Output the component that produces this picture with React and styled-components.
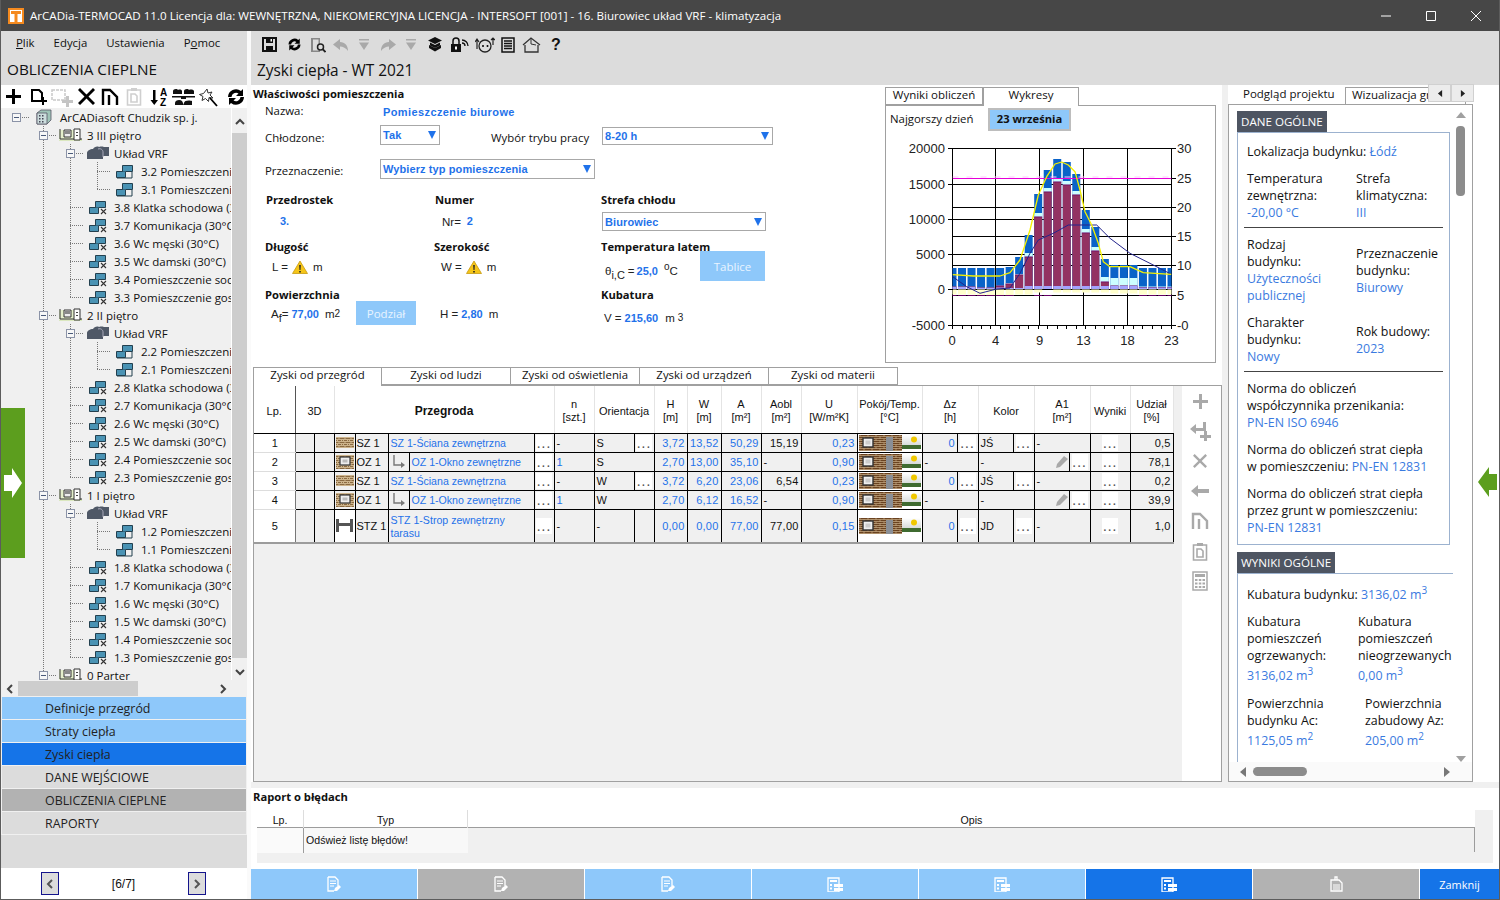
import React from 'react';
import styled, { createGlobalStyle, css } from 'styled-components';

const UI = '"Open Sans", "Noto Sans", sans-serif';
const ARIAL = '"Liberation Sans", Arial, sans-serif';
const BLUE = '#1f72ea';
const LIGHTBLUE = '#8ec8fa';
const ACTIVE = '#1574e8';
const BAND = '#dcdcdc';
const PANEL = '#f0f0f0';
const EDGE = '#a0a0a0';

const Global = createGlobalStyle`
  html, body { margin: 0; padding: 0; background: #fff; }
  *, *::before, *::after { box-sizing: border-box; }
  #root { width: 1500px; height: 900px; }
`;

const Win = styled.div`
  position: relative; width: 1500px; height: 900px; overflow: hidden; display: flex; flex-direction: column;
  background: #fff; border: 1px solid #5c5c5c; border-top: 0; font-family: ${UI}; color: #111; font-size: 12px;
`;
const TitleBar = styled.header`
  height: 31px; flex: none; margin: 0 -1px; background: #474747; color: #fff; display: flex; align-items: center;
  padding: 0 2px 0 8px; font-size: 11.6px;
`;
const TitleText = styled.div`flex: 1; margin-left: 6px; white-space: nowrap;`;
const WinBtn = styled.div`width: 45px; height: 31px; display: flex; align-items: center; justify-content: center;`;
const Workspace = styled.div`flex: 1; display: flex; min-height: 0;`;
const Sp = styled.span`width: ${p => p.$w}px; flex: none;`;

/* left column */
const LeftCol = styled.aside`width: 246px; flex: none; display: flex; flex-direction: column; background: ${PANEL};`;
const Gap = styled.div`width: 4px; flex: none; background: #fafafa;`;
const HeadBand = styled.div`height: 54px; flex: none; background: ${BAND};`;
const MenuBar = styled.nav`height: 23px; display: flex; align-items: center; padding-left: 15px; gap: 19px; font-size: 11.4px;`;
const MenuItem = styled.span`u { text-decoration: underline; }`;
const LeftTitle = styled.div`padding: 1px 0 0 6px; font-size: 15.3px; line-height: 29px; white-space: nowrap;`;
const LeftTools = styled.div`height: 23px; flex: none; background: #fff; display: flex; align-items: center; padding-left: 4px;`;
const TreeBox = styled.div`height: 572px; flex: none; display: flex;`;
const TreeList = styled.div`flex: 1; min-width: 0; overflow: hidden; padding-left: 2px;`;
const Row = styled.div`display: flex; height: 18px; align-items: center; white-space: nowrap; font-size: 11.5px;`;
const dotted = css`
  background-image: repeating-linear-gradient(to bottom, #777 0 1px, transparent 1px 2px), repeating-linear-gradient(to right, #777 0 1px, transparent 1px 2px);
`;
const Guide = styled.div`
  width: 27px; height: 18px; flex: none; position: relative; display: flex; align-items: center; justify-content: center;
  background-repeat: no-repeat;
  ${p => p.$kind === 'v' && css`
    background-image: repeating-linear-gradient(to bottom, #777 0 1px, transparent 1px 2px);
    background-size: 1px 100%; background-position: 13px 0;`}
  ${p => (p.$kind === 't' || p.$kind === 'e') && css`
    ${dotted}
    background-size: 1px 100%, 14px 1px; background-position: 13px 0, 13px 9px;`}
  ${p => p.$kind === 'l' && css`
    ${dotted}
    background-size: 1px 10px, 14px 1px; background-position: 13px 0, 13px 9px;`}
  ${p => p.$kind === 'r' && css`
    background-image: repeating-linear-gradient(to right, #777 0 1px, transparent 1px 2px);
    background-size: 14px 1px; background-position: 13px 9px;`}
`;
const Expander = styled.div`
  width: 9px; height: 9px; border: 1px solid #8b93a7; background: #f7f7f7; display: flex; align-items: center; justify-content: center;
  &::after { content: ''; width: 5px; height: 1px; background: #4a5a7a; }
`;
const RowIcon = styled.div`width: 27px; height: 18px; flex: none; display: flex; align-items: center; justify-content: center;`;
const RowText = styled.span`margin-left: 3px;`;
const VScroll = styled.div`
  width: 16px; flex: none; display: flex; flex-direction: column; align-items: center; padding: 10px 0 4px; background: ${PANEL}; border-left: 1px solid #fff;
`;
const VThumb = styled.div`width: 16px; flex: 1; margin: 7px 0 10px; background: #cdcdcd;`;
const HScrollLeft = styled.div`height: 17px; flex: none; display: flex; align-items: center; padding: 0 20px 0 5px;`;
const HThumb = styled.div`width: 120px; height: 15px; margin: 0 auto 0 4px; background: #cdcdcd;`;
const NavList = styled.div`height: 138px; flex: none; padding: 0 0 0 1px; width: 245px;`;
const NavItem = styled.div`
  height: 22px; margin-bottom: 1px; padding-left: 43px; line-height: 24px; font-size: 12.4px; color: #222; white-space: nowrap; overflow: hidden;
  background: ${p => p.$tone === 'blue' ? LIGHTBLUE : p.$tone === 'active' ? ACTIVE : p.$tone === 'dark' ? '#b2b2b2' : BAND};
`;
const NavFill = styled.div`height: 33px; flex: none; background: ${BAND}; width: 246px;`;
const Pager = styled.div`height: 31px; flex: none; background: #fff; display: flex; align-items: center; padding-left: 40px; font-size: 12px;`;
const PagerBtn = styled.div`width: 18px; height: 23px; border: 1px solid #14148c; background: ${BAND}; display: flex; align-items: center; justify-content: center;`;
const PagerText = styled.div`width: 129px; text-align: center; font-family: ${ARIAL};`;

/* right column */
const RightCol = styled.div`flex: 1; min-width: 0; display: flex; flex-direction: column;`;
const MainHead = styled.div`height: 54px; flex: none; background: ${BAND};`;
const MainTools = styled.div`height: 25px; display: flex; align-items: center; padding: 2px 0 0 11px;`;
const MainTitle = styled.div`padding: 1px 0 0 6px; font-size: 15.4px; line-height: 28px;`;
const Content = styled.div`height: 697px; flex: none; display: flex; background: #fff;`;
const MainPanel = styled.main`width: 971px; flex: none; display: flex; flex-direction: column;`;
const Divider = styled.div`width: 6px; flex: none; background: ${PANEL};`;
const TopArea = styled.div`height: 282px; flex: none; display: flex;`;
const Form = styled.section`width: 634px; flex: none; padding-left: 2px;`;
const FormTitle = styled.div`height: 18px; font-weight: 700; font-size: 11.2px; line-height: 17px;`;
const FormBody = styled.div`margin-left: 12px;`;
const FormRow = styled.div`display: flex; margin-top: ${p => p.$mt || 0}px; height: ${p => p.$h}px;`;
const Lab = styled.div`
  width: ${p => p.$w}px; flex: none; font-size: 11.4px; padding-top: ${p => p.$pt || 0}px; margin-left: ${p => p.$ml || 0}px; white-space: nowrap;
`;
const BlueVal = styled.span`color: ${BLUE}; font: 700 11px ${ARIAL}; white-space: nowrap; margin-left: ${p => p.$ml || 0}px; margin-top: ${p => p.$mt || 0}px;`;
const NameVal = styled(BlueVal)`padding-left: 3px; letter-spacing: .4px; line-height: 18px;`;
const Select = styled.div`
  width: ${p => p.$w}px; height: ${p => p.$h || 20}px; flex: none; border: 1px solid #a8a8a8; padding: 0 3px 0 2px; display: flex; align-items: center; justify-content: space-between;
  color: ${BLUE}; font: 700 11px ${ARIAL}; letter-spacing: .1px; background: #fff; margin-left: ${p => p.$ml || 0}px; margin-top: ${p => p.$mt || 0}px;
`;
const Tri = styled.span`width: 0; height: 0; border-left: 4px solid transparent; border-right: 4px solid transparent; border-top: 8px solid ${BLUE};`;
const FieldGrid = styled.div`
  margin-top: 14px; display: grid; grid-template-columns: 169px 167px 1fr; grid-template-rows: 16px 31px 16px 32px 16px 30px;
`;
const FieldHead = styled.div`font-weight: 700; font-size: 11.2px; line-height: 14px; white-space: nowrap; padding-left: ${p => p.$pl || 0}px;`;
const FieldVal = styled.div`
  display: flex; align-items: center; height: 16px; gap: ${p => p.$gap ?? 3}px; font: 11.5px ${ARIAL}; color: #222; white-space: nowrap; flex: none;
  width: ${p => p.$w ? p.$w + 'px' : 'auto'}; padding-left: ${p => p.$pl || 0}px; margin-top: ${p => p.$mt || 0}px;
`;
const Unit = styled.span`margin-left: ${p => p.$ml || 0}px;`;
const Sub = styled.span`font-size: 11px; line-height: 0; position: relative; top: 4px;`;
const Sup = styled.sup`font-size: 10px; line-height: 0; vertical-align: 5px;`;
const FlatBtn = styled.div`
  width: ${p => p.$w}px; height: ${p => p.$h}px; background: ${LIGHTBLUE}; color: #e9f4ff; font-size: 11.5px; display: flex; align-items: center; justify-content: center; flex: none;
  margin-top: ${p => p.$mt || 0}px; margin-left: ${p => p.$ml || 0}px;
`;
const ValWithBtn = styled.div`display: flex; align-items: flex-start;`;

const ChartCol = styled.section`width: 331px; flex: none; padding-top: 2px;`;
const ChartTabs = styled.div`display: flex; height: 18px;`;
const SmallTab = styled.div`
  width: ${p => p.$w}px; height: ${p => p.$active ? 19 : 18}px; border: 1px solid ${EDGE}; border-bottom: ${p => p.$active ? 0 : 1}px solid ${EDGE}; background: #fff; text-align: center;
  font-size: 11.5px; line-height: 14px; position: relative; white-space: nowrap; overflow: hidden;
`;
const ChartBody = styled.div`height: 258px; border: 1px solid ${EDGE}; background: #fff;`;
const ChartHead = styled.div`height: 26px; display: flex; padding-left: 4px; font-size: 11.4px; line-height: 26px;`;
const WorstLab = styled.span`width: 98px; flex: none; white-space: nowrap;`;
const Worst = styled.div`
  margin-top: 2px; width: 83px; height: 23px; border: 2px solid #bdbdbd; background: ${LIGHTBLUE}; font-weight: 700; font-size: 11.2px; line-height: 18px; text-align: center; white-space: nowrap;
`;
const ChartSvg = styled.svg`display: block; font-family: ${ARIAL};`;

const TabStrip = styled.div`height: 18px; flex: none; display: flex; margin-left: 2px; position: relative; z-index: 1;`;
const MainTab = styled.div`
  width: 129px; height: ${p => p.$active ? 19 : 18}px; border: 1px solid ${EDGE}; border-left: ${p => p.$first ? 1 : 0}px solid ${EDGE}; border-bottom: ${p => p.$active ? 0 : 1}px solid ${EDGE};
  background: #fff; text-align: center; font-size: 11.4px; line-height: 14px; white-space: nowrap;
`;
const TablePanel = styled.div`flex: 1; margin-left: 2px; border: 1px solid ${EDGE}; display: flex; min-height: 0; background: ${PANEL};`;
const TableArea = styled.div`width: 928px; flex: none;`;
const SideTools = styled.div`flex: 1; background: #fff; display: flex; flex-direction: column; align-items: center; padding-right: 3px;`;
const SideTool = styled.div`height: 30px; display: flex; align-items: center; justify-content: center;`;
const Grid = styled.table`
  width: 919px; table-layout: fixed; border-collapse: collapse; font: 11px ${ARIAL}; color: #111; background: #fff; border-bottom: 2px solid #9c9c9c;
`;
const Th = styled.th`
  height: 47px; font-weight: ${p => p.$strong ? 700 : 400}; font-size: ${p => p.$strong ? 12 : 11}px; border-right: 1px solid #e4e4e4; border-bottom: 1px solid #000; padding: 4px 0 0; line-height: 13px; white-space: nowrap;
`;
const DarkTh = styled(Th)`border-right-color: #555;`;
const TBodyRow = styled.tr`height: ${p => p.$h || 19}px;`;
const Td = styled.td`
  padding: 2px ${p => p.$align === 'right' ? 2 : 1}px 0 ${p => p.$pl ?? (p.$align === 'right' ? 0 : 2)}px; height: inherit; background: ${PANEL}; color: ${p => p.$blue ? BLUE : '#111'};
  text-align: ${p => p.$align || 'left'}; border-right: 1px solid #000; border-bottom: 1px solid #000; line-height: 13px; overflow: hidden; white-space: ${p => p.$wrap ? 'normal' : 'nowrap'};
  letter-spacing: ${p => p.$num ? .2 : 0}px; font-size: ${p => p.$fs || 11}px;
`;
const LpTd = styled(Td)`text-align: center; background: #fff; border-bottom: 1px solid #ddd; border-right: 1px solid #777;`;
const PicTd = styled(Td)`padding: 0; background: ${p => p.$white ? '#fff' : PANEL};`;
const CenterBox = styled.div`display: flex; align-items: center; justify-content: ${p => p.$j || 'center'};`;
const DotsBox = styled.div`
  width: 16px; height: 16px; margin: 0 auto; background: #fff; font: 700 10px/20px ${ARIAL}; letter-spacing: 2px; padding-left: 1px; text-align: center; color: #555; overflow: hidden;
`;
const Dots = () => <PicTd><DotsBox>...</DotsBox></PicTd>;

const RightPanel = styled.aside`width: 245px; flex: none; padding-top: 2px; position: relative; font-size: 12.4px;`;
const RTabs = styled.div`height: 17px; display: flex; padding-left: 1px; overflow: hidden;`;
const RTab = styled.div`
  width: ${p => p.$w}px; height: 17px; flex: none; border-right: 1px solid ${EDGE}; border-top: ${p => p.$active ? 0 : 1}px solid ${EDGE}; font-size: 11.5px; line-height: 14px; white-space: nowrap; overflow: hidden; background: #fff; padding-left: ${p => p.$active ? 14 : 6}px;
`;
const TabArrows = styled.div`position: absolute; top: -1px; left: 200px; display: flex;`;
const TabArrow = styled.div`width: 23px; height: 18px; background: #ececec; border: 1px solid #d0d0d0; display: flex; align-items: center; justify-content: center;`;
const RBody = styled.div`height: 678px; border: 1px solid ${EDGE}; display: flex; flex-direction: column;`;
const RMain = styled.div`flex: 1; min-height: 0; display: flex;`;
const RContent = styled.div`width: 224px; flex: none; overflow: hidden; padding: 6px 0 0 8px;`;
const RV = styled.div`flex: 1; display: flex; flex-direction: column; align-items: center; padding: 7px 4px 0 0;`;
const RVThumb = styled.div`width: 9px; height: 70px; margin: 8px 0 auto; border-radius: 4px; background: #8c8c8c;`;
const RH = styled.div`height: 19px; flex: none; display: flex; align-items: center; padding: 0 22px 0 11px; background: #fafafa;`;
const RHThumb = styled.div`width: 54px; height: 9px; margin: 0 auto 0 7px; border-radius: 5px; background: #8c8c8c;`;
const SecHead = styled.div`
  display: inline-block; vertical-align: top; height: 21px; padding: 0 4px; background: #4e5562; color: #fff; font-size: 11.6px; line-height: 21px; white-space: nowrap; margin-top: ${p => p.$mt || 0}px;
`;
const SecBox = styled.div`
  width: ${p => p.$w}px; border: 1px solid #9cb2cf; ${p => p.$open && 'border-right: 0; border-bottom: 0;'} padding: ${p => p.$pt}px 0 8px 9px; line-height: 17px;
`;
const Para = styled.div`margin-top: ${p => p.$mt || 0}px; white-space: ${p => p.$nowrap ? 'nowrap' : 'normal'}; width: ${p => p.$w ? p.$w + 'px' : 'auto'};`;
const Val = styled.span`color: #3a7ae0;`;
const ValLine = styled.div`color: #3a7ae0; margin-top: ${p => p.$mt || 0}px; white-space: nowrap;`;
const TwoCol = styled.div`
  display: grid; grid-template-columns: ${p => p.$first}px 1fr; margin-top: ${p => p.$mt ?? 10}px; align-items: ${p => p.$center ? 'center' : 'start'}; width: ${p => p.$w || 196}px; white-space: nowrap;
`;
const Rule = styled.hr`border: 0; border-top: 1px solid #444; margin: 6px 0 8px -3px; width: 199px;`;

const MidBand = styled.div`height: 6px; flex: none; background: ${PANEL};`;
const ErrorSec = styled.section`height: 81px; flex: none; background: #fff; padding-left: 2px;`;
const ErrTitle = styled.div`font-weight: 700; font-size: 11.2px; line-height: 18px; height: 22px;`;
const ErrGrid = styled.div`margin-left: 4px; width: 1236px; display: flex;`;
const ErrMain = styled.div`width: 1218px; flex: none; font: 10.6px ${ARIAL};`;
const ErrStrip = styled.div`flex: 1; height: 53px; background: ${PANEL};`;
const ErrHead = styled.div`display: grid; grid-template-columns: 47px 164px 1fr; height: 18px; text-align: center; line-height: 20px; border-bottom: 1px solid #9c9c9c;`;
const ErrCol = styled.div`border-right: 1px solid #ddd;`;
const ErrRow = styled.div`display: grid; grid-template-columns: 47px 164px 1fr; height: 24px; line-height: 25px; border-bottom: 1px solid #9c9c9c; border-right: 1px solid #9c9c9c;`;
const ErrLp = styled.div`background: #fafafa; border-right: 1px solid #9c9c9c;`;
const ErrText = styled.div`background: #f8f8f8; padding-left: 2px; white-space: nowrap;`;
const ErrDesc = styled.div`background: ${PANEL};`;
const ErrFoot = styled.div`height: 11px; background: ${PANEL};`;

const BottomBar = styled.footer`height: 30px; flex: none; display: flex; gap: 1px;`;
const BarBtn = styled.div`
  width: 166px; flex: ${p => p.$grow ? 1 : 'none'}; background: ${p => p.$tone === 'grey' ? '#b2b2b2' : p.$tone === 'active' ? ACTIVE : LIGHTBLUE};
  display: flex; align-items: center; justify-content: center; color: #fff; font-size: 11px;
`;

const LeftFlag = styled.div`
  position: absolute; left: 0; top: 408px; width: 24px; height: 150px; background: #5c9e1e; display: flex; align-items: center; justify-content: center;
`;
const RightFlag = styled.div`position: absolute; left: 1477px; top: 467px;`;

/* ---- icons ---- */
const Svg = styled.svg`flex: none; display: block; ${p => p.$flip && 'transform: scaleX(-1);'}`;
const I = ({ w = 16, h = 16, vb, flip, children }) => <Svg width={w} height={h} viewBox={vb || `0 0 ${w} ${h}`} $flip={flip}>{children}</Svg>;

const AppLogo = () => <I w={16} h={16}><rect width="16" height="16" fill="#f58a1f" /><rect x="2" y="2" width="12" height="12" fill="#fff" /><path d="M3 3h10v3H9.500v8h-3V6H3z" fill="#f58a1f" /></I>;
const PlusI = ({ c = '#000', s = 17 }) => <I w={s} h={s} vb="0 0 17 17"><path d="M7 1h3v6h6v3h-6v6H7v-6H1V7h6z" fill={c} /></I>;
const DocPlus = () => <I w={18} h={20}><path d="M2 3h7l3 3v8H2z" fill="none" stroke="#000" strokeWidth="2" /><path d="M12 10h2v3h3v2h-3v3h-2v-3H9v-2h3z" fill="#000" /></I>;
const CopyPlus = () => <I w={22} h={20}><path d="M1 3h13v10H1z" fill="none" stroke="#c9c9c9" strokeWidth="1.500" strokeDasharray="3 1" /><path d="M15 9h3v4h4v3h-4v4h-3v-4h-4v-3h4z" fill="#c4c4c4" /></I>;
const XI = ({ c = '#000', s = 17 }) => <I w={s} h={s} vb="0 0 17 17"><path d="M2 0l6.500 6.500L15 0l2 2-6.500 6.500L17 15l-2 2-6.500-6.500L2 17l-2-2 6.500-6.500L0 2z" fill={c} /></I>;
const Fork = ({ c = '#000' }) => <I w={19} h={18}><path d="M2 17V2h7l7 7v8M8 17V7" fill="none" stroke={c} strokeWidth="2.400" /></I>;
const Clip = ({ c = '#cfcfcf' }) => <I w={16} h={19}><path d="M1.500 3h13v15h-13z" fill="none" stroke={c} strokeWidth="1.600" /><path d="M5 1h6v3H5z" fill={c} /><path d="M5 7h4l2 2v6H5z" fill="none" stroke={c} strokeWidth="1.600" /></I>;
const SortAZ = () => <I w={20} h={20}><path d="M4 3h2.500v10H9l-3.750 5L1.500 13H4z" fill="#000" /><text x="11" y="9" fontSize="10" fontWeight="700" fontFamily={ARIAL}>A</text><text x="11" y="19" fontSize="10" fontWeight="700" fontFamily={ARIAL}>Z</text></I>;
const Stacked = () => <I w={23} h={20}><path d="M1 7V4c0-2 4-3 5-1 2-1 4 0 4 1v3zM12 7V4c0-2 4-3 5-1 2-1 5 0 5 1v3z" fill="#111" /><path d="M0 9h23v1.500H0z" fill="#111" /><path d="M9 10h5v2H9zM3 18v-2c0-3 5-4 7-2l2 4zM12 18v-2c0-3 6-3 8-2v4z" fill="#111" /></I>;
const Wand = () => <I w={19} h={20}><path d="M8 2l1 4 4-1-2 3 3 3-4-.5-.5 4-3-3-3.500 2 1-4-3.500-2 4-1z" fill="none" stroke="#333" strokeWidth="1" /><path d="M11 11l7 8" stroke="#000" strokeWidth="1.800" /></I>;
const Sync = ({ s = 20 }) => <I w={s} h={s} vb="0 0 20 20"><path d="M2 10a8 8 0 0 1 13-6l2-2v7h-7l2.500-2.500A4.500 4.500 0 0 0 5.500 10z" fill="#000" /><path d="M18 10a8 8 0 0 1-13 6l-2 2v-7h7l-2.500 2.500A4.500 4.500 0 0 0 14.500 10z" fill="#000" /></I>;
const SaveI = () => <I w={15} h={15}><path d="M1 1h13v13H1z" fill="none" stroke="#111" strokeWidth="2" /><path d="M4 1h7v5H4zM4 9h7v5H4z" fill="#111" /><path d="M8.500 2h1.500v2.500H8.500z" fill="#fff" /></I>;
const FileSearch = () => <I w={16} h={16}><path d="M1 1h9v14H1z" fill="#888" /><path d="M3 2.500h5.500v11H3z" fill="#dcdcdc" /><circle cx="10.500" cy="10" r="3" fill="#dcdcdc" stroke="#222" strokeWidth="1.500" /><path d="M12.500 12l3 3" stroke="#222" strokeWidth="1.800" /></I>;
const UndoI = ({ flip }) => <I w={16} h={14} flip={flip}><path d="M7 1L0 6.500 7 12V8.500c3 0 6 1.500 8 4.500 0-6-3-8.500-8-9z" fill="#a9a9a9" /></I>;
const DropTri = () => <I w={10} h={12}><path d="M0 0h10v1.500H0zM0 3.500h10L5 11z" fill="#a9a9a9" /></I>;
const Hat = () => <I w={16} h={15}><path d="M8 0l7 3.500L8 7 1 3.500zM3 5.500l5 2.500 5-2.500v3l-5 2.500-5-2.500z" fill="#111" /><path d="M2 8l6 3 6-3v3l-6 3.500L2 11z" fill="#111" /></I>;
const LockWifi = () => <I w={19} h={16}><path d="M1 7h10v8H1z" fill="#111" /><path d="M3 7V4a3 3 0 0 1 6 0v3" fill="none" stroke="#111" strokeWidth="1.500" /><rect x="5" y="9.500" width="2" height="3" fill="#fff" /><path d="M12 6a3 3 0 0 1 3 3M12 3a6 6 0 0 1 6 6" fill="none" stroke="#111" strokeWidth="1.300" /></I>;
const Face = () => <I w={20} h={16}><circle cx="10" cy="9" r="6" fill="none" stroke="#222" strokeWidth="1.300" /><circle cx="8" cy="9" r="1" /><circle cx="12.500" cy="9" r="1" /><path d="M2 12V3M0 5l2-3 2 3M18 8V1M16 3l2-2 2 2" fill="none" stroke="#222" strokeWidth="1.200" /></I>;
const ListDoc = () => <I w={14} h={16}><path d="M1 1h12v14H1z" fill="none" stroke="#111" strokeWidth="1.500" /><path d="M3 4h8M3 6.500h8M3 9h8M3 11.500h8" stroke="#111" strokeWidth="1.300" /></I>;
const House = () => <I w={19} h={16}><path d="M1 8l8-7 9 7M3 8v7h13V8" fill="none" stroke="#333" strokeWidth="1.300" /><path d="M9 1v6l5 1" fill="none" stroke="#333" strokeWidth="1" /></I>;
const HelpMark = styled.span`font: 700 16px/16px ${ARIAL};`;

const BuildingI = () => <I w={16} h={16}><path d="M1 4l4-3h10v10l-4 4H1z" fill="#9fc4b8" stroke="#556" strokeWidth=".8" /><path d="M1 4h10v11H1z" fill="#cdd" stroke="#556" strokeWidth=".8" /><path d="M3 6h1.500v1.500H3zM6 6h1.500v1.500H6zM3 9h1.500v1.500H3zM6 9h1.500v1.500H6zM3 12h1.500v1.500H3zM6 12h1.500v1.500H6z" fill="#445" /></I>;
const FloorI = () => <I w={23} h={14}><rect y="11" width="23" height="2" fill="#dbe8c0" /><rect y="2" width="21" height="10" fill="#e4efcc" /><path d="M1 1v10M1 11h22" stroke="#333" strokeWidth="1" fill="none" /><path d="M5 2h7v7H5z" fill="#eee" stroke="#333" strokeWidth="1" /><path d="M6 3h5v3H6z" fill="#888" /><path d="M15 1h6v11h-6z" fill="#fff" stroke="#333" strokeWidth="1" /><path d="M17 4h2v1h-2zM17 7h2v1h-2z" fill="#444" /></I>;
const VrfI = () => <I w={22} h={14}><path d="M0 13V7c0-2 3-4 6-4 1-2 4-3 6-2 3-1 5 0 5 0h5v9h-6v3z" fill="#4f5866" /><path d="M11 3c3-1 5 1 5 3v5" stroke="#aab" strokeWidth="1" fill="none" /></I>;
const RoomI = ({ bad }) => <I w={18} h={16}><path d="M.5 8.500h9v6h-9z" fill="#4a93b4" stroke="#23404f" strokeWidth="1" /><path d="M6.500 8.500v-6h10v6h-7" fill="#4a93b4" stroke="#23404f" strokeWidth="1" />{bad ? <path d="M12 10l5 5M17 10l-5 5" stroke="#333" strokeWidth="1.100" /> : <path d="M1 15h15v-6" fill="none" stroke="#23404f" strokeWidth="1" />}</I>;
const ChevL = ({ c = '#444', s = 8 }) => <I w={s} h={10} vb="0 0 8 10"><path d="M6 1L2 5l4 4" fill="none" stroke={c} strokeWidth="2" /></I>;
const ChevR = ({ c = '#444', s = 8 }) => <I w={s} h={10} vb="0 0 8 10"><path d="M2 1l4 4-4 4" fill="none" stroke={c} strokeWidth="2" /></I>;
const ChevU = () => <I w={10} h={8}><path d="M1 6l4-4 4 4" fill="none" stroke="#444" strokeWidth="2" /></I>;
const ChevD = () => <I w={10} h={8}><path d="M1 2l4 4 4-4" fill="none" stroke="#444" strokeWidth="2" /></I>;
const TriU = () => <I w={10} h={6}><path d="M0 6l5-6 5 6z" fill="#a0a0a0" /></I>;
const TriD = () => <I w={10} h={6}><path d="M0 0l5 6 5-6z" fill="#a0a0a0" /></I>;
const TriL = ({ c = '#777', s = 10 }) => <I w={6} h={s} vb="0 0 6 10"><path d="M6 0L0 5l6 5z" fill={c} /></I>;
const TriR = ({ c = '#777', s = 10 }) => <I w={6} h={s} vb="0 0 6 10"><path d="M0 0l6 5-6 5z" fill={c} /></I>;
const Warn = () => <I w={16} h={14}><path d="M8 1l7.500 12.500H.500z" fill="#f5c518" stroke="#c79a10" strokeWidth=".8" /><path d="M7.200 5h1.600l-.3 5h-1zM7.200 11h1.600v1.500H7.200z" fill="#222" /></I>;
const brickPat = id => <defs><pattern id={id} width="6" height="4" patternUnits="userSpaceOnUse"><rect width="6" height="4" fill="#cdb48c" /><path d="M0 1h2.500v1H0zM3.500 1H6v1H3.500zM0 3h1v1H0zM2 3h3v1H2z" fill="#8a6a42" /></pattern></defs>;
const Brick = ({ id }) => <I w={18} h={11}>{brickPat(id)}<rect width="18" height="11" fill={`url(#${id})`} /></I>;
const BrickWin = ({ id }) => <I w={18} h={14}>{brickPat(id)}<rect width="18" height="14" fill={`url(#${id})`} /><rect x="4" y="2" width="10" height="8" fill="#eee" stroke="#333" strokeWidth="1.200" /><rect x="6.500" y="4.500" width="5" height="3" fill="#bbb" /></I>;
const Beam = () => <I w={17} h={13}><rect width="17" height="13" fill="#fff" /><path d="M0 0h3v13H0zM14 0h3v13h-3zM3 4h11v3H3z" fill="#555" /></I>;
const Branch = () => <I w={14} h={14}><path d="M2 0v10h8" fill="none" stroke="#777" strokeWidth="1.400" /><path d="M9 7l4 3-4 3z" fill="#777" /></I>;
const RoomScene = ({ id }) => <I w={62} h={16}>
  <defs>
    <pattern id={id} width="8" height="4" patternUnits="userSpaceOnUse"><rect width="8" height="4" fill="#6a4220" /><path d="M0 1.500h8M0 3.500h8M1 0v1.500M5 1.500v2" stroke="#d8c098" strokeWidth=".6" /></pattern>
    <linearGradient id={`${id}s`} x1="0" y1="0" x2="0" y2="1"><stop offset="0" stopColor="#fff" /><stop offset="1" stopColor="#c0c6c4" /></linearGradient>
  </defs>
  <rect width="43" height="16" fill={`url(#${id})`} />
  <rect x="4" y="3" width="10" height="9" fill="#eee" stroke="#333" strokeWidth="1.400" />
  <rect x="6.500" y="5.500" width="5" height="4" fill="#ccc" />
  <rect x="27" y="2" width="7" height="14" fill="#8a8f96" />
  <rect x="43" width="19" height="16" fill={`url(#${id}s)`} />
  <circle cx="55" cy="4.500" r="3" fill="#f0c800" />
  <rect x="43" y="10" width="19" height="4" fill="#3f6b30" />
  <rect x="43" y="14" width="19" height="2" fill="#fff" />
</I>;
const Pencil = () => <I w={13} h={13}><path d="M0 13l1-4 7-8 4 3-8 8z" fill="#a9a9a9" /></I>;
const DocPen = () => <I w={14} h={16}><path d="M1 1h7l3 3v6M1 1v14h6" fill="none" stroke="#fff" strokeWidth="1.300" /><path d="M3 5h6M3 7.500h6M3 10h4" stroke="#fff" strokeWidth="1" /><path d="M7 15l1-3 4-3 2 2-4 4z" fill="#fff" /></I>;
const CalcI = () => <I w={16} h={15}><path d="M1 1h11v14H1z" fill="none" stroke="#fff" strokeWidth="1.300" /><path d="M3 3h7v2H3z" fill="#fff" /><path d="M3 7h2v2H3zM3 10.500h2v2H3zM7 7h9v3H7zM7 11h9v3H7z" fill="#fff" /></I>;
const PlainDoc = () => <I w={13} h={16}><path d="M1 4h8l3 3v8H1zM5 4V1h2v3" fill="none" stroke="#fff" strokeWidth="1.300" /><path d="M3 9h7M3 11h7M3 13h7" stroke="#fff" strokeWidth="1" /></I>;
const CalcGrey = () => <I w={16} h={20}><path d="M1 1h14v18H1z" fill="none" stroke="#a9a9a9" strokeWidth="1.500" /><path d="M3 3h10v3H3z" fill="#a9a9a9" /><path d="M3 8h2.500v2H3zM6.800 8h2.500v2H6.800zM10.500 8H13v2h-2.500zM3 11.500h2.500v2H3zM6.800 11.500h2.500v2H6.800zM10.500 11.500H13v2h-2.500zM3 15h2.500v2H3zM6.800 15h2.500v2H6.800zM10.500 15H13v2h-2.500z" fill="#a9a9a9" /></I>;
const EnterPlus = () => <I w={22} h={20}><path d="M14 1h3v9H7v3L1 8l6-5v4h7z" fill="#a9a9a9" /><path d="M15 10h3v4h4v3h-4v3h-3v-3h-4v-3h4z" fill="#a9a9a9" /></I>;
const BackArrow = () => <I w={18} h={12}><path d="M7 0v4h11v4H7v4L0 6z" fill="#a9a9a9" /></I>;

/* ---- chart ---- */
const TOTAL = [21, 21, 21, 21, 21, 21, 22, 32, 54, 95, 119, 130, 127, 115, 79, 62, 30, 24, 24, 24, 21, 21, 21, 21];
const MAROON = [2, 2, 2, 1, 1, 3, 5, 14, 32, 72, 97, 107, 104, 94, 56, 38, 7, 3, 3, 3, 1.5, 1.5, 1.5, 1.5];
const LILAC = [2, 2, 2, 1, 1, 1.5, 1, 1, 3, 3, 3, 3, 3, 3, 3, 3, 3, 3, 3, 3, 1.5, 1.5, 1.5, 1.5];
const CYAN = [.5, .5, .5, .5, .5, .5, 1, 1, 4, 4, 4, 4, 4, 4, 4, 4, 5, 8, 8, 8, 1, 1, 1, 1];
const NEG = [5, 5, 5, 6, 6, 6, 6, 5, 5, 3, 0, 3, 3, 3, 3, 3, 3, 4, 4, 4, 5, 5, 5, 5];
const DARKNEG = [1, 1, 1, 1, 1, 1, 1, 0, 0, 1, 1, 0, 0, 0, 0, 0, 0, 0, 0, 0, 1, 1, 1, 1];
const YELLOW = [[38, 404], [100, 408], [180, 408], [210, 398], [240, 360], [270, 270], [295, 165], [320, 110], [345, 72], [365, 66], [385, 75], [405, 95], [420, 150], [435, 215], [455, 255], [475, 310], [490, 365], [510, 380], [570, 380], [610, 398], [694, 403]];
const NAVY = [[38, 410], [80, 440], [120, 460], [170, 447], [210, 444], [240, 400], [270, 340], [295, 300], [340, 280], [385, 255], [470, 255], [510, 295], [570, 340], [640, 375], [694, 403]];
const pts = a => a.map(([x, y]) => `${(940 + x / 3).toFixed(1)},${(140 + y / 3).toFixed(1)}`).join(' ');
const PX0 = 952.5, PX1 = 1171.5, Y0 = 289;

function Chart() {
  const step = (PX1 - PX0) / 23;
  const hLines = [148.5, 184.5, 207.5, 219.5, 236.5, 254.5, 265.5, 289.5, 295.5, 325.5];
  const vLines = [952.5, 995.5, 1039.5, 1083.5, 1127.5, 1171.5];
  const bw = 8;
  return (
    <ChartSvg width="329" height="230" viewBox="886 132 329 230">
      <defs><clipPath id="plot"><rect x={PX0} y="140" width={PX1 - PX0} height="190" /></clipPath></defs>
      {hLines.map(y => <line key={y} x1={PX0} x2={PX1} y1={y} y2={y} stroke="#000" strokeWidth="1" shapeRendering="crispEdges" />)}
      {vLines.map(x => <line key={x} x1={x} x2={x} y1="148" y2="325" stroke="#000" strokeWidth="1" shapeRendering="crispEdges" />)}
      <g clipPath="url(#plot)">
        {TOTAL.map((t, i) => {
          const x = PX0 + i * step - bw / 2;
          const cy = MAROON[i] + CYAN[i];
          return (
            <g key={i}>
              <rect x={x} y={Y0 - t} width={bw} height={t} fill="#0a63c8" />
              <rect x={x} y={Y0 - cy} width={bw} height={CYAN[i]} fill="#ccffff" />
              <rect x={x} y={Y0 - MAROON[i]} width={bw} height={MAROON[i]} fill="#933262" />
              <rect x={x} y={Y0 - MAROON[i] - .5} width={bw} height={.8} fill="#660066" />
              <rect x={x} y={Y0 - LILAC[i]} width={bw} height={LILAC[i]} fill="#a3a3ff" />
              <rect x={x} y={Y0 + .5} width={bw} height={NEG[i]} fill="#ffffcc" />
              {DARKNEG[i] ? <rect x={x} y={Y0 + 6} width={bw} height="1" fill="#660066" /> : null}
            </g>
          );
        })}
        <line x1={PX0} x2={PX1} y1="177" y2="177" stroke="#ffc6ff" strokeWidth="1" strokeDasharray="6 8" />
        <line x1={PX0} x2={PX1} y1="178.500" y2="178.500" stroke="#e600d8" strokeWidth="1" />
        <polyline points={pts(NAVY)} fill="none" stroke="#24248c" strokeWidth="1" />
        <polyline points={pts(YELLOW)} fill="none" stroke="#f4f000" strokeWidth="1.300" strokeLinejoin="round" />
      </g>
      {[[148.5, '20000'], [184.5, '15000'], [219.5, '10000'], [254.5, '5000'], [289.5, '0'], [325.5, '-5000']].map(([y, t]) => (
        <g key={t}>
          <line x1="948" x2={PX0} y1={y} y2={y} stroke="#000" shapeRendering="crispEdges" />
          <text x="945" y={y + 4} textAnchor="end" fontSize="13" fill="#222">{t}</text>
        </g>
      ))}
      {[[148.5, '30'], [178.5, '25'], [207.5, '20'], [236.5, '15'], [265.5, '10'], [295.5, '5'], [325.5, '-0']].map(([y, t]) => (
        <g key={t}>
          <line x1={PX1} x2="1176" y1={y} y2={y} stroke="#000" shapeRendering="crispEdges" />
          <text x="1177" y={y + 4} fontSize="13" fill="#222">{t}</text>
        </g>
      ))}
      {Array.from({ length: 24 }, (_, i) => <line key={i} x1={PX0 + i * step} x2={PX0 + i * step} y1="325" y2="329" stroke="#000" shapeRendering="crispEdges" />)}
      {[[952, '0'], [995.5, '4'], [1039.5, '9'], [1083.5, '13'], [1127.5, '18'], [1171.5, '23']].map(([x, t]) => (
        <text key={t} x={x} y="345" textAnchor="middle" fontSize="13" fill="#222">{t}</text>
      ))}
    </ChartSvg>
  );
}

/* ---- tree ---- */
const Tree = () => {
  const rows = [];
  const push = (guides, icon, label) => rows.push({ guides, icon, label });
  push(['r'], <BuildingI />, 'ArCADiasoft Chudzik sp. j.');
  [['3', '3 III piętro'], ['2', '2 II piętro'], ['1', '1 I piętro']].forEach(([n, name]) => {
    push(['', 'e'], <FloorI />, name);
    push(['', 'v', 'e'], <VrfI />, 'Układ VRF');
    push(['', 'v', 'v', 't'], <RoomI />, `${n}.2 Pomieszczenie biurowe`);
    push(['', 'v', 'v', 'l'], <RoomI />, `${n}.1 Pomieszczenie biurowe`);
    [['8', 'Klatka schodowa (30°C)'], ['7', 'Komunikacja (30°C)'], ['6', 'Wc męski (30°C)'], ['5', 'Wc damski (30°C)'], ['4', 'Pomieszczenie socjalne'], ['3', 'Pomieszczenie gospodarcze']].forEach(([k, t]) => {
      push(['', 'v', k === '3' ? 'l' : 't'], <RoomI bad />, `${n}.${k} ${t}`);
    });
  });
  push(['', 'e'], <FloorI />, '0 Parter');
  return (
    <TreeList>
      {rows.map((r, i) => (
        <Row key={i}>
          {r.guides.map((g, j) => <Guide key={j} $kind={g}>{g === 'e' || g === 'r' ? <Expander /> : null}</Guide>)}
          <RowIcon>{r.icon}</RowIcon>
          <RowText>{r.label}</RowText>
        </Row>
      ))}
    </TreeList>
  );
};

/* ---- table ---- */
const colWidths = [41, 19, 20, 21, 33, 21, 125, 20, 40, 40, 20, 33, 34, 40, 40, 56, 65, 35, 21, 35, 21, 35, 21, 40, 43];
const TableRow = ({ h, lp, partIcon, code, branch, name, wrap, n, orient, vals, aobl, aoblLeft, u, dz, kolor, pencil, udz, sceneId }) => (
  <TBodyRow $h={h}>
    <LpTd>{lp}</LpTd>
    <Td /><Td />
    <PicTd $white={!!partIcon.white}><CenterBox>{partIcon.el}</CenterBox></PicTd>
    <Td $pl={1}>{code}</Td>
    {branch ? <PicTd><CenterBox><Branch /></CenterBox></PicTd> : null}
    <Td colSpan={branch ? 1 : 2} $blue $wrap={wrap} $fs={10.6}>{name}</Td>
    <Dots />
    <Td $blue={n !== '-'}>{n}</Td>
    {branch ? <Td colSpan={2}>{orient}</Td> : <><Td>{orient}</Td>{orient === '-' ? <Td /> : <Dots />}</>}
    {vals.map((v, i) => <Td key={i} $blue $num $align="right">{v}</Td>)}
    {aoblLeft ? <Td>-</Td> : <Td $num $align="right">{aobl}</Td>}
    <Td $blue $num $align="right">{u}</Td>
    <PicTd $white><CenterBox><RoomScene id={sceneId} /></CenterBox></PicTd>
    {dz === '-' ? <Td colSpan={2}>-</Td> : <><Td $blue $align="right">{dz}</Td><Dots /></>}
    {kolor === '-' ? <Td colSpan={2}>-</Td> : <><Td>{kolor}</Td><Dots /></>}
    {pencil ? <><PicTd><CenterBox $j="flex-end"><Pencil /></CenterBox></PicTd><Dots /></> : <Td colSpan={2}>-</Td>}
    <Dots />
    <Td $num $align="right">{udz}</Td>
  </TBodyRow>
);

function DataTable() {
  return (
    <Grid>
      <colgroup>{colWidths.map((w, i) => <col key={i} width={w} />)}</colgroup>
      <thead>
        <tr>
          <DarkTh>Lp.</DarkTh>
          <Th colSpan={2}>3D</Th>
          <Th colSpan={5} $strong>Przegroda</Th>
          <Th>n<br />[szt.]</Th>
          <Th colSpan={2}>Orientacja</Th>
          <Th>H<br />[m]</Th>
          <Th>W<br />[m]</Th>
          <Th>A<br />[m²]</Th>
          <Th>Aobl<br />[m²]</Th>
          <Th>U<br />[W/m²K]</Th>
          <Th>Pokój/Temp.<br />[°C]</Th>
          <Th colSpan={2}>Δz<br />[h]</Th>
          <Th colSpan={2}>Kolor</Th>
          <Th colSpan={2}>A1<br />[m²]</Th>
          <Th>Wyniki</Th>
          <Th>Udział<br />[%]</Th>
        </tr>
      </thead>
      <tbody>
        <TableRow sceneId="s1" lp="1" partIcon={{ el: <Brick id="b1" /> }} code="SZ 1" name="SZ 1-Ściana zewnętrzna" n="-" orient="S" vals={['3,72', '13,52', '50,29']} aobl="15,19" u="0,23" dz="0" kolor="JŚ" udz="0,5" />
        <TableRow sceneId="s2" lp="2" partIcon={{ el: <BrickWin id="w1" /> }} code="OZ 1" branch name="OZ 1-Okno zewnętrzne" n="1" orient="S" vals={['2,70', '13,00', '35,10']} aoblLeft u="0,90" dz="-" kolor="-" pencil udz="78,1" />
        <TableRow sceneId="s3" lp="3" partIcon={{ el: <Brick id="b3" /> }} code="SZ 1" name="SZ 1-Ściana zewnętrzna" n="-" orient="W" vals={['3,72', '6,20', '23,06']} aobl="6,54" u="0,23" dz="0" kolor="JŚ" udz="0,2" />
        <TableRow sceneId="s4" lp="4" partIcon={{ el: <BrickWin id="w2" /> }} code="OZ 1" branch name="OZ 1-Okno zewnętrzne" n="1" orient="W" vals={['2,70', '6,12', '16,52']} aoblLeft u="0,90" dz="-" kolor="-" pencil udz="39,9" />
        <TableRow sceneId="s5" h={34} lp="5" partIcon={{ el: <Beam />, white: true }} code="STZ 1" name="STZ 1-Strop zewnętrzny tarasu" wrap n="-" orient="-" vals={['0,00', '0,00', '77,00']} aobl="77,00" u="0,15" dz="0" kolor="JD" udz="1,0" />
      </tbody>
    </Grid>
  );
}

export default function App() {
  return (
    <>
      <Global />
      <Win>
        <TitleBar>
          <AppLogo />
          <TitleText>ArCADia-TERMOCAD 11.0 Licencja dla: WEWNĘTRZNA, NIEKOMERCYJNA LICENCJA - INTERSOFT [001] - 16. Biurowiec układ VRF - klimatyzacja</TitleText>
          <WinBtn><I w={10} h={10}><path d="M0 5h10" stroke="#fff" /></I></WinBtn>
          <WinBtn><I w={10} h={10}><path d="M.5.5h9v9h-9z" fill="none" stroke="#fff" /></I></WinBtn>
          <WinBtn><I w={10} h={10}><path d="M0 0l10 10M10 0L0 10" stroke="#fff" /></I></WinBtn>
        </TitleBar>
        <Workspace>
          <LeftCol>
            <HeadBand>
              <MenuBar>
                <MenuItem><u>P</u>lik</MenuItem>
                <MenuItem>Edycja</MenuItem>
                <MenuItem>Ustawienia</MenuItem>
                <MenuItem>P<u>o</u>moc</MenuItem>
              </MenuBar>
              <LeftTitle>OBLICZENIA CIEPLNE</LeftTitle>
            </HeadBand>
            <LeftTools>
              <PlusI /><Sp $w={8} /><DocPlus /><Sp $w={3} /><CopyPlus /><Sp $w={5} />
              <XI /><Sp $w={6} /><Fork /><Sp $w={6} /><Clip /><Sp $w={7} />
              <SortAZ /><Sp $w={3} /><Stacked /><Sp $w={4} /><Wand /><Sp $w={8} /><Sync />
            </LeftTools>
            <TreeBox>
              <Tree />
              <VScroll><ChevU /><VThumb /><ChevD /></VScroll>
            </TreeBox>
            <HScrollLeft><ChevL /><HThumb /><ChevR /></HScrollLeft>
            <NavList>
              <NavItem $tone="blue">Definicje przegród</NavItem>
              <NavItem $tone="blue">Straty ciepła</NavItem>
              <NavItem $tone="active">Zyski ciepła</NavItem>
              <NavItem>DANE WEJŚCIOWE</NavItem>
              <NavItem $tone="dark">OBLICZENIA CIEPLNE</NavItem>
              <NavItem>RAPORTY</NavItem>
            </NavList>
            <NavFill />
            <Pager>
              <PagerBtn><ChevL c="#555" /></PagerBtn>
              <PagerText>[6/7]</PagerText>
              <PagerBtn><ChevR c="#555" /></PagerBtn>
            </Pager>
          </LeftCol>
          <Gap />
          <RightCol>
            <MainHead>
              <MainTools>
                <SaveI /><Sp $w={10} /><Sync s={15} /><Sp $w={8} /><FileSearch /><Sp $w={7} /><UndoI /><Sp $w={10} /><DropTri /><Sp $w={11} /><UndoI flip /><Sp $w={10} /><DropTri /><Sp $w={11} />
                <Hat /><Sp $w={7} /><LockWifi /><Sp $w={6} /><Face /><Sp $w={6} /><ListDoc /><Sp $w={7} /><House /><Sp $w={10} /><HelpMark>?</HelpMark>
              </MainTools>
              <MainTitle>Zyski ciepła - WT 2021</MainTitle>
            </MainHead>
            <Content>
              <MainPanel>
                <TopArea>
                  <Form>
                    <FormTitle>Właściwości pomieszczenia</FormTitle>
                    <FormBody>
                      <FormRow $h={18}><Lab $w={115}>Nazwa:</Lab><NameVal>Pomieszczenie biurowe</NameVal></FormRow>
                      <FormRow $mt={4} $h={22}>
                        <Lab $w={115} $pt={5}>Chłodzone:</Lab>
                        <Select $w={60}>Tak<Tri /></Select>
                        <Lab $w={111} $pt={5} $ml={51}>Wybór trybu pracy</Lab>
                        <Select $w={171} $h={18} $mt={2}>8-20 h<Tri /></Select>
                      </FormRow>
                      <FormRow $mt={12} $h={20}>
                        <Lab $w={115} $pt={4}>Przeznaczenie:</Lab>
                        <Select $w={215}>Wybierz typ pomieszczenia<Tri /></Select>
                      </FormRow>
                      <FieldGrid>
                        <FieldHead $pl={1}>Przedrostek</FieldHead>
                        <FieldHead $pl={1}>Numer</FieldHead>
                        <FieldHead>Strefa chłodu</FieldHead>
                        <FieldVal $pl={15} $mt={4}><BlueVal>3.</BlueVal></FieldVal>
                        <FieldVal $pl={8} $mt={5}>Nr= <BlueVal $ml={3} $mt={-2}>2</BlueVal></FieldVal>
                        <div><Select $w={164} $h={19} $ml={1} $mt={3}>Biurowiec<Tri /></Select></div>
                        <FieldHead>Długość</FieldHead>
                        <FieldHead>Szerokość</FieldHead>
                        <FieldHead>Temperatura latem</FieldHead>
                        <FieldVal $pl={7} $mt={3} $gap={0}>L =<Unit $ml={4}><Warn /></Unit><Unit $ml={5}>m</Unit></FieldVal>
                        <FieldVal $pl={7} $mt={3} $gap={0}>W =<Unit $ml={4}><Warn /></Unit><Unit $ml={5}>m</Unit></FieldVal>
                        <ValWithBtn>
                          <FieldVal $w={99} $pl={4} $mt={7} $gap={0}>θ<Sub>i,C</Sub><Unit $ml={3}>=</Unit><BlueVal $ml={2}>25,0</BlueVal><Unit $ml={6}><Sup>o</Sup>C</Unit></FieldVal>
                          <FlatBtn $w={65} $h={30} $mt={-5}>Tablice</FlatBtn>
                        </ValWithBtn>
                        <FieldHead>Powierzchnia</FieldHead>
                        <div />
                        <FieldHead>Kubatura</FieldHead>
                        <ValWithBtn>
                          <FieldVal $w={91} $pl={6} $mt={2} $gap={0}>A<Sub>f</Sub>=<BlueVal $ml={3}>77,00</BlueVal><Unit $ml={6}>m</Unit><Sup>2</Sup></FieldVal>
                          <FlatBtn $w={60} $h={24} $mt={-3}>Podział</FlatBtn>
                        </ValWithBtn>
                        <FieldVal $pl={6} $mt={2}>H =<BlueVal>2,80</BlueVal><Unit $ml={3}>m</Unit></FieldVal>
                        <FieldVal $pl={3} $mt={6}>V =<BlueVal>215,60</BlueVal><Unit $ml={4}>m</Unit><Sup>3</Sup></FieldVal>
                      </FieldGrid>
                    </FormBody>
                  </Form>
                  <ChartCol>
                    <ChartTabs>
                      <SmallTab $w={98}>Wyniki obliczeń</SmallTab>
                      <SmallTab $w={96} $active>Wykresy</SmallTab>
                    </ChartTabs>
                    <ChartBody>
                      <ChartHead><WorstLab>Najgorszy dzień</WorstLab><Worst>23 września</Worst></ChartHead>
                      <Chart />
                    </ChartBody>
                  </ChartCol>
                </TopArea>
                <TabStrip>
                  <MainTab $first $active>Zyski od przegród</MainTab>
                  <MainTab>Zyski od ludzi</MainTab>
                  <MainTab>Zyski od oświetlenia</MainTab>
                  <MainTab>Zyski od urządzeń</MainTab>
                  <MainTab>Zyski od materii</MainTab>
                </TabStrip>
                <TablePanel>
                  <TableArea><DataTable /></TableArea>
                  <SideTools>
                    <SideTool><PlusI c="#a9a9a9" /></SideTool>
                    <SideTool><EnterPlus /></SideTool>
                    <SideTool><XI c="#a9a9a9" s={14} /></SideTool>
                    <SideTool><BackArrow /></SideTool>
                    <SideTool><Fork c="#a9a9a9" /></SideTool>
                    <SideTool><Clip c="#a9a9a9" /></SideTool>
                    <SideTool><CalcGrey /></SideTool>
                  </SideTools>
                </TablePanel>
              </MainPanel>
              <Divider />
              <RightPanel>
                <RTabs>
                  <RTab $w={117} $active>Podgląd projektu</RTab>
                  <RTab $w={120}>Wizualizacja graficzna</RTab>
                </RTabs>
                <TabArrows>
                  <TabArrow><TriL c="#222" s={7} /></TabArrow>
                  <TabArrow><TriR c="#222" s={7} /></TabArrow>
                </TabArrows>
                <RBody>
                  <RMain>
                    <RContent>
                      <SecHead>DANE OGÓLNE</SecHead>
                      <SecBox $w={213} $pt={10}>
                        <Para $nowrap>Lokalizacja budynku: <Val>Łódź</Val></Para>
                        <TwoCol $first={109}>
                          <div>Temperatura<br />zewnętrzna:<ValLine>-20,00 °C</ValLine></div>
                          <div>Strefa<br />klimatyczna:<ValLine>III</ValLine></div>
                        </TwoCol>
                        <Rule />
                        <TwoCol $first={109} $center $mt={0}>
                          <div>Rodzaj<br />budynku:<ValLine>Użyteczności<br />publicznej</ValLine></div>
                          <div>Przeznaczenie<br />budynku:<ValLine>Biurowy</ValLine></div>
                        </TwoCol>
                        <TwoCol $first={109} $center>
                          <div>Charakter<br />budynku:<ValLine>Nowy</ValLine></div>
                          <div>Rok budowy:<ValLine>2023</ValLine></div>
                        </TwoCol>
                        <Rule />
                        <Para $w={190}>Norma do obliczeń<br />współczynnika przenikania:<ValLine>PN-EN ISO 6946</ValLine></Para>
                        <Para $mt={10} $w={200}>Norma do obliczeń strat ciepła<br />w pomieszczeniu: <Val>PN-EN 12831</Val></Para>
                        <Para $mt={10} $w={200}>Norma do obliczeń strat ciepła<br />przez grunt w pomieszczeniu:<ValLine>PN-EN 12831</ValLine></Para>
                      </SecBox>
                      <SecHead $mt={7}>WYNIKI OGÓLNE</SecHead>
                      <SecBox $w={300} $pt={12} $open>
                        <Para $nowrap>Kubatura budynku: <Val>3136,02 m<Sup>3</Sup></Val></Para>
                        <TwoCol $first={111} $w={260}>
                          <div>Kubatura<br />pomieszczeń<br />ogrzewanych:<ValLine $mt={3}>3136,02 m<Sup>3</Sup></ValLine></div>
                          <div>Kubatura<br />pomieszczeń<br />nieogrzewanych<ValLine $mt={3}>0,00 m<Sup>3</Sup></ValLine></div>
                        </TwoCol>
                        <TwoCol $first={118} $w={260} $mt={11}>
                          <div>Powierzchnia<br />budynku Ac:<ValLine $mt={3}>1125,05 m<Sup>2</Sup></ValLine></div>
                          <div>Powierzchnia<br />zabudowy Az:<ValLine $mt={3}>205,00 m<Sup>2</Sup></ValLine></div>
                        </TwoCol>
                        <TwoCol $first={118} $w={260}>
                          <div>Powierzchnia<br />ogrzewana:</div>
                          <div>Powierzchnia<br />chłodzona:</div>
                        </TwoCol>
                      </SecBox>
                    </RContent>
                    <RV><TriU /><RVThumb /><TriD /></RV>
                  </RMain>
                  <RH><TriL /><RHThumb /><TriR /></RH>
                </RBody>
              </RightPanel>
            </Content>
            <MidBand />
            <ErrorSec>
              <ErrTitle>Raport o błędach</ErrTitle>
              <ErrGrid>
                <ErrMain>
                  <ErrHead><ErrCol>Lp.</ErrCol><ErrCol>Typ</ErrCol><div>Opis</div></ErrHead>
                  <ErrRow><ErrLp /><ErrText>Odśwież listę błędów!</ErrText><ErrDesc /></ErrRow>
                  <ErrFoot />
                </ErrMain>
                <ErrStrip />
              </ErrGrid>
            </ErrorSec>
            <BottomBar>
              <BarBtn><DocPen /></BarBtn>
              <BarBtn $tone="grey"><DocPen /></BarBtn>
              <BarBtn><DocPen /></BarBtn>
              <BarBtn><CalcI /></BarBtn>
              <BarBtn><CalcI /></BarBtn>
              <BarBtn $tone="active"><CalcI /></BarBtn>
              <BarBtn $tone="grey"><PlainDoc /></BarBtn>
              <BarBtn $tone="active" $grow>Zamknij</BarBtn>
            </BottomBar>
          </RightCol>
        </Workspace>
        <LeftFlag><I w={18} h={30}><path d="M0 7h8V0l10 15L8 30v-7H0z" fill="#fff" /></I></LeftFlag>
        <RightFlag><I w={19} h={30}><path d="M19 7h-8V0L0 15l11 15v-7h8z" fill="#5c9e1e" /></I></RightFlag>
      </Win>
    </>
  );
}
